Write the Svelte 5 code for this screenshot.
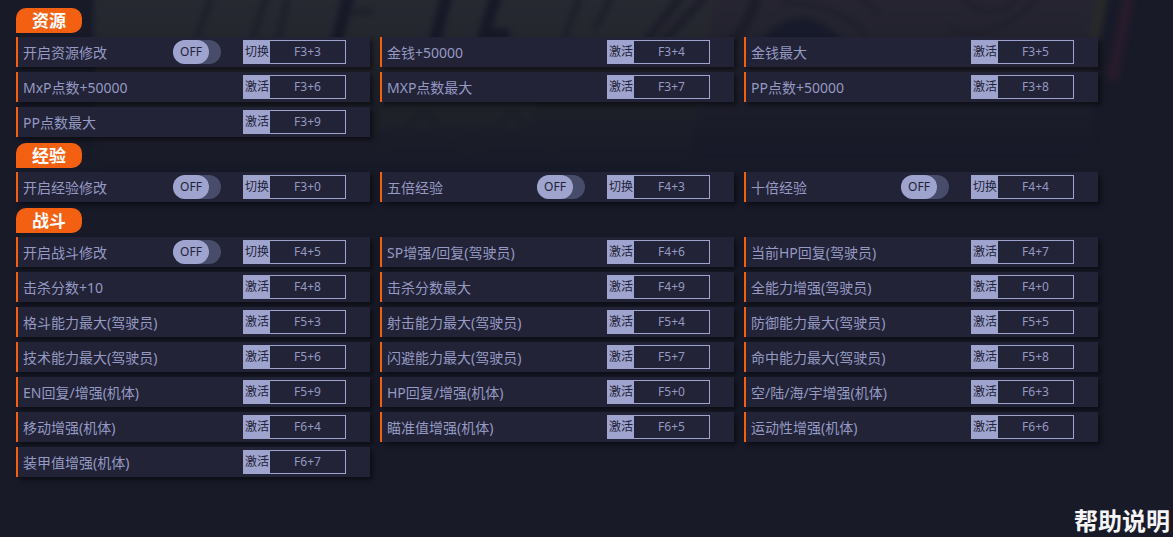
<script lang="ts">
  type Cheat = { label: string; keys: string; toggle?: boolean };
  type Group = { title: string; items: Cheat[] };

  const groups: Group[] = [
    {
      title: '资源',
      items: [
        { label: '开启资源修改', keys: 'F3+3', toggle: true },
        { label: '金钱+50000', keys: 'F3+4' },
        { label: '金钱最大', keys: 'F3+5' },
        { label: 'MxP点数+50000', keys: 'F3+6' },
        { label: 'MXP点数最大', keys: 'F3+7' },
        { label: 'PP点数+50000', keys: 'F3+8' },
        { label: 'PP点数最大', keys: 'F3+9' },
      ],
    },
    {
      title: '经验',
      items: [
        { label: '开启经验修改', keys: 'F3+0', toggle: true },
        { label: '五倍经验', keys: 'F4+3', toggle: true },
        { label: '十倍经验', keys: 'F4+4', toggle: true },
      ],
    },
    {
      title: '战斗',
      items: [
        { label: '开启战斗修改', keys: 'F4+5', toggle: true },
        { label: 'SP增强/回复(驾驶员)', keys: 'F4+6' },
        { label: '当前HP回复(驾驶员)', keys: 'F4+7' },
        { label: '击杀分数+10', keys: 'F4+8' },
        { label: '击杀分数最大', keys: 'F4+9' },
        { label: '全能力增强(驾驶员)', keys: 'F4+0' },
        { label: '格斗能力最大(驾驶员)', keys: 'F5+3' },
        { label: '射击能力最大(驾驶员)', keys: 'F5+4' },
        { label: '防御能力最大(驾驶员)', keys: 'F5+5' },
        { label: '技术能力最大(驾驶员)', keys: 'F5+6' },
        { label: '闪避能力最大(驾驶员)', keys: 'F5+7' },
        { label: '命中能力最大(驾驶员)', keys: 'F5+8' },
        { label: 'EN回复/增强(机体)', keys: 'F5+9' },
        { label: 'HP回复/增强(机体)', keys: 'F5+0' },
        { label: '空/陆/海/宇增强(机体)', keys: 'F6+3' },
        { label: '移动增强(机体)', keys: 'F6+4' },
        { label: '瞄准值增强(机体)', keys: 'F6+5' },
        { label: '运动性增强(机体)', keys: 'F6+6' },
        { label: '装甲值增强(机体)', keys: 'F6+7' },
      ],
    },
  ];

  let enabled: Record<string, boolean> = $state({});

  function trigger(item: Cheat) {
    if (item.toggle) enabled[item.keys] = !enabled[item.keys];
  }
</script>

<div class="page">
  <svg class="backdrop" viewBox="0 0 1173 180" preserveAspectRatio="xMidYMin slice" aria-hidden="true">
    <defs>
      <filter id="soft" filterUnits="userSpaceOnUse" x="-20" y="-40" width="1213" height="240" color-interpolation-filters="sRGB">
        <feGaussianBlur stdDeviation="3" />
      </filter>
      <linearGradient id="fade" x1="0" y1="0" x2="0" y2="1">
        <stop offset="0" stop-color="#282a33" />
        <stop offset="0.3" stop-color="#25272f" />
        <stop offset="0.65" stop-color="#1d1f28" />
        <stop offset="1" stop-color="#181a28" />
      </linearGradient>
      <linearGradient id="fadeRight" x1="0" y1="0" x2="0" y2="1">
        <stop offset="0" stop-color="#272632" />
        <stop offset="0.4" stop-color="#22222e" />
        <stop offset="1" stop-color="#181a28" />
      </linearGradient>
    </defs>
    <g filter="url(#soft)">
      <path d="M94 -20H720L690 170H94Z" fill="url(#fade)" />
      <path d="M716 -20H1104L1090 150H690Z" fill="url(#fadeRight)" />
      <path d="M350 -10L336 44M448 -10L434 44M498 -10L484 34H510" stroke="#171827" stroke-width="12" fill="none" />
      <path d="M212 -4L196 40M266 -4L252 40M288 -4L278 40M352 12H374M580 -4L564 40M612 -4L594 30" stroke="#1d1e28" stroke-width="6" fill="none" />
      <path d="M686 -10L644 44M706 -4L660 44" stroke="#1b1c28" stroke-width="8" fill="none" />
      <path d="M378 100H540L530 126H380Z" fill="#1f2129" />
      <path d="M376 154L424 112L470 154L512 112L550 150" stroke="#1b1d28" stroke-width="5" fill="none" />
      <path d="M730 44Q750 24 756 -4" stroke="#1b1c28" stroke-width="10" fill="none" />
      <path d="M758 44Q800 -8 846 44Z" fill="#171a2a" />
      <path d="M860 -4L880 14M946 26Q990 48 1040 -4M960 -4Q990 26 1020 -4M780 2Q840 2 866 36" stroke="#1e1e2a" stroke-width="4" fill="none" />
      <path d="M1104 -10L1090 60" stroke="#292a2a" stroke-width="10" />
      <path d="M1130 -10L1112 80" stroke="#271c2b" stroke-width="12" />
    </g>
  </svg>

  <main>
    {#each groups as group}
      <section>
        <h2>{group.title}</h2>
        <ul>
          {#each group.items as item}
            <li>
              <span class="name">{item.label}</span>
              {#if item.toggle}
                <label class="switch">
                  <input type="checkbox" role="switch" aria-label={item.label} bind:checked={enabled[item.keys]} />
                  <span class="knob">{enabled[item.keys] ? 'ON' : 'OFF'}</span>
                </label>
              {/if}
              <button class="hotkey" type="button" onclick={() => trigger(item)}>
                <span class="action">{item.toggle ? '切换' : '激活'}</span>
                <span class="keys">{item.keys}</span>
              </button>
            </li>
          {/each}
        </ul>
      </section>
    {/each}
  </main>

  <footer>
    <a href="#help">帮助说明</a>
  </footer>
</div>

<style>
  :global(body) {
    margin: 0;
    background: #181a28;
  }

  .page {
    position: relative;
    display: flex;
    flex-direction: column;
    box-sizing: border-box;
    min-height: 100vh;
    overflow: hidden;
    font-family: 'Noto Sans', 'Noto Sans CJK SC', sans-serif;
    color: #9599c3;
    background: #181a28;
  }

  .backdrop {
    position: absolute;
    top: 0;
    left: 0;
    width: 100%;
    height: 180px;
  }

  main {
    position: relative;
    display: flex;
    flex-direction: column;
    gap: 6px;
    padding: 8px 75px 0 16px;
  }

  section {
    display: flex;
    flex-direction: column;
    align-items: flex-start;
    gap: 4px;
  }

  h2 {
    margin: 0;
    padding: 0 16px;
    border-radius: 10px 10px 10px 0;
    background: #f36012;
    color: #fff;
    font-size: 17px;
    font-weight: 700;
    line-height: 25px;
  }

  ul {
    display: grid;
    grid-template-columns: repeat(3, 1fr);
    gap: 5px 10px;
    width: 100%;
    margin: 0;
    padding: 0;
    list-style: none;
  }

  li {
    display: flex;
    align-items: center;
    box-sizing: border-box;
    height: 30px;
    padding: 0 24px 0 5px;
    border-left: 2px solid #f36012;
    background: #222336;
    box-shadow: 3px 3px 5px rgba(0, 0, 0, 0.5);
  }

  .name {
    flex: 1;
    padding-top: 2px;
    font-size: 14px;
    line-height: 30px;
    white-space: nowrap;
  }

  .switch {
    position: relative;
    width: 48px;
    height: 24px;
    margin-right: 22px;
    border-radius: 12px;
    background: #484c6b;
    cursor: pointer;
  }

  .switch input {
    position: absolute;
    inset: 0;
    margin: 0;
    opacity: 0;
  }

  .knob {
    display: block;
    width: 36px;
    border-radius: 12px;
    background: #9fa4cf;
    color: #222336;
    font-size: 12px;
    line-height: 24px;
    text-align: center;
  }

  .switch input:checked + .knob { margin-left: auto; }

  .hotkey {
    display: flex;
    box-sizing: border-box;
    width: 103px;
    height: 24px;
    padding: 0;
    border: 1px solid #9fa4cf;
    background: none;
    color: inherit;
    font-family: inherit;
    font-size: 12px;
    line-height: 22px;
    cursor: pointer;
  }

  .action {
    width: 26px;
    background: #9fa4cf;
    color: #222336;
  }

  .keys { flex: 1; }

  footer {
    position: relative;
    display: flex;
    justify-content: flex-end;
    margin-top: auto;
    padding-right: 3px;
  }

  footer a {
    color: #f4f4f6;
    font-size: 24px;
    font-weight: 700;
    line-height: 32px;
    text-decoration: none;
  }
</style>
